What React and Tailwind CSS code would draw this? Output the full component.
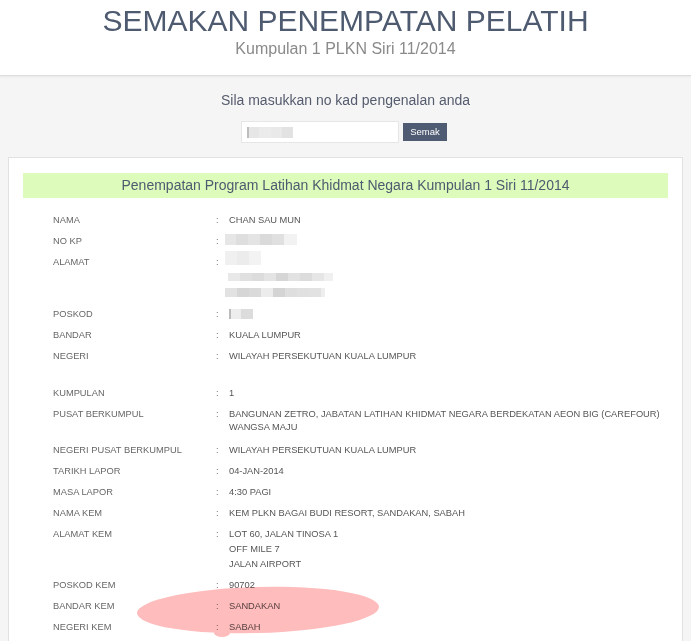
import React from 'react';

// pixelated (censored) block, made of grey cells
const Mosaic = ({ cells, h = 10, className = '' }) => (
  <span className={`flex ${className}`}>
    {cells.map(([w, c], i) => (
      <span key={i} className="block" style={{ width: w, height: h, background: c }} />
    ))}
  </span>
);

const Row = ({ label, children, className = '' }) => (
  <div className={`grid grid-cols-[163px_13px_1fr] py-[4px] leading-[13px] ${className}`}>
    <div className="text-[#666]">{label}</div>
    <div className="text-[#777]">:</div>
    <div className="text-[#555]">{children}</div>
  </div>
);

export default function App() {
  return (
    <div className="relative min-h-screen bg-[#f5f5f5] font-['Liberation_Sans',Arial,sans-serif]">
      {/* header */}
      <div className="h-[76px] bg-white border-b border-[#dedede] shadow-[0_1px_2px_rgba(0,0,0,0.06)] pt-[6px] text-center">
        <h1 className="text-[30px] leading-none text-[#4e5a6f]">SEMAKAN PENEMPATAN PELATIH</h1>
        <p className="mt-[5px] text-[16px] leading-none text-[#8a8a8a]">Kumpulan 1 PLKN Siri 11/2014</p>
      </div>

      {/* search */}
      <div className="pt-[17px] text-center">
        <p className="text-[14px] leading-none text-[#555c6e]">Sila masukkan no kad pengenalan anda</p>
        <div className="mt-[14px] flex items-center justify-center gap-[4px] pr-[3px]">
          <div className="w-[158px] h-[22px] bg-white border border-[#e6e6e6] flex items-center pl-[5px]">
            <Mosaic
              h={11}
              cells={[['2px', '#bdbdbd'], ['10px', '#e6e6e6'], ['12px', '#ebebeb'], ['11px', '#e9e9e9'], ['11px', '#e2e2e2']]}
            />
          </div>
          <button className="w-[44px] h-[18px] bg-[#4f5b72] text-white text-[9.5px] leading-none">Semak</button>
        </div>
      </div>

      {/* result card */}
      <div className="mx-[8px] mt-[14px] bg-white border border-[#e2e2e2] px-[14px] pt-[15px] pb-6">
        <div className="h-[25px] bg-[#ddfcbb] text-center text-[14px] leading-[25px] text-[#4e5a6f]">
          Penempatan Program Latihan Khidmat Negara Kumpulan 1 Siri 11/2014
        </div>

        <div className="mt-[12px] pl-[30px] text-[9.3px]">
          <Row label="NAMA">CHAN SAU MUN</Row>
          <Row label="NO KP">
            <Mosaic
              h={11}
              className="-mt-[1px] -ml-[4px]"
              cells={[['11px', '#e6e6e6'], ['12px', '#dedede'], ['12px', '#e4e4e4'], ['12px', '#dadada'], ['12px', '#e0e0e0'], ['13px', '#f2f2f2']]}
            />
          </Row>
          <Row label="ALAMAT">
            <Mosaic h={14} className="-mt-[5px] -ml-[4px]" cells={[['12px', '#f0f0f0'], ['12px', '#ececec'], ['12px', '#f3f3f3']]} />
            <Mosaic
              h={8}
              className="mt-[8px] -ml-[1px]"
              cells={[['12px', '#e8e8e8'], ['12px', '#e0e0e0'], ['12px', '#dcdcdc'], ['12px', '#e4e4e4'], ['12px', '#d6d6d6'], ['12px', '#e2e2e2'], ['12px', '#dcdcdc'], ['12px', '#e6e6e6'], ['9px', '#f0f0f0']]}
            />
            <Mosaic
              h={9}
              className="mt-[7px] mb-[3px] -ml-[4px]"
              cells={[['12px', '#e2e2e2'], ['12px', '#d6d6d6'], ['12px', '#dadada'], ['12px', '#ececec'], ['12px', '#d4d4d4'], ['12px', '#dedede'], ['12px', '#e0e0e0'], ['12px', '#e2e2e2'], ['4px', '#eeeeee']]}
            />
          </Row>
          <Row label="POSKOD">
            <Mosaic h={10} className="mt-[1px] mb-[2px]" cells={[['2px', '#bbbbbb'], ['10px', '#ededed'], ['12px', '#dcdcdc']]} />
          </Row>
          <Row label="BANDAR">KUALA LUMPUR</Row>
          <Row label="NEGERI">WILAYAH PERSEKUTUAN KUALA LUMPUR</Row>
          <div className="h-[16px]" />
          <Row label="KUMPULAN">1</Row>
          <Row label="PUSAT BERKUMPUL" className="pb-[6px] leading-[12px]">
            <div className="whitespace-nowrap">
              BANGUNAN ZETRO, JABATAN LATIHAN KHIDMAT NEGARA BERDEKATAN AEON BIG (CAREFOUR)
            </div>
            <div>WANGSA MAJU</div>
          </Row>
          <Row label="NEGERI PUSAT BERKUMPUL">WILAYAH PERSEKUTUAN KUALA LUMPUR</Row>
          <Row label="TARIKH LAPOR">04-JAN-2014</Row>
          <Row label="MASA LAPOR">4:30 PAGI</Row>
          <Row label="NAMA KEM">KEM PLKN BAGAI BUDI RESORT, SANDAKAN, SABAH</Row>
          <Row label="ALAMAT KEM">
            <div className="space-y-[2px]">
              <div>LOT 60, JALAN TINOSA 1</div>
              <div>OFF MILE 7</div>
              <div>JALAN AIRPORT</div>
            </div>
          </Row>
          <Row label="POSKOD KEM">90702</Row>
          <Row label="BANDAR KEM">SANDAKAN</Row>
          <Row label="NEGERI KEM">SABAH</Row>
        </div>
      </div>

      {/* hand-drawn highlight on top of the page */}
      <svg
        className="absolute left-[130px] top-[580px] mix-blend-multiply pointer-events-none"
        width="260"
        height="62"
        viewBox="0 0 260 62"
      >
        <g fill="#ffbcbc">
          <ellipse cx="128" cy="30" rx="121" ry="23" transform="rotate(-1.5 128 30)" />
          <ellipse cx="92" cy="53" rx="8" ry="4" />
        </g>
      </svg>
    </div>
  );
}
